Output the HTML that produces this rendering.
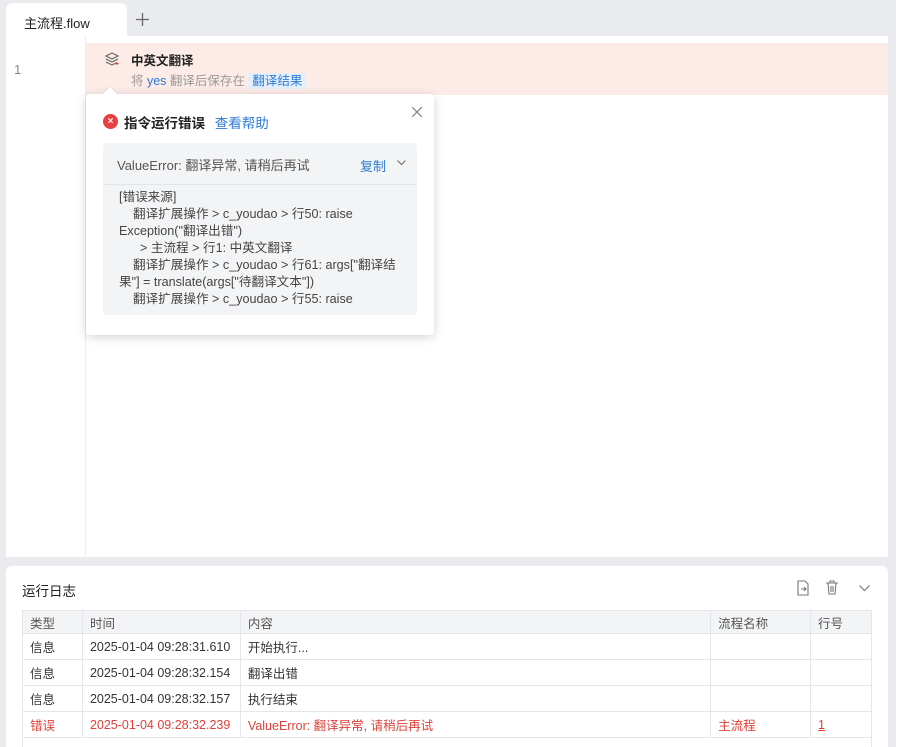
<!DOCTYPE html>
<html><head><meta charset="utf-8"><style>
*{box-sizing:border-box;margin:0;padding:0}
html,body{width:905px;height:747px;overflow:hidden}
body{background:#fff;font-family:"Liberation Sans","Noto Sans CJK SC",sans-serif;font-size:13px;color:#333;position:relative}
.bg{position:absolute;left:0;top:0;width:896px;height:747px;background:#eaebef}
.abs{position:absolute}
table{border-collapse:collapse;font-size:12.5px}
td{border:1px solid #e4e6ea;height:26px;padding:0 7px;white-space:nowrap}
tr.h td{background:#f3f4f6;height:23px;color:#555}
tr.err td{color:#e0403a}
</style></head><body>
<div class="bg"></div>
<div class="abs" style="left:6px;top:3px;width:121px;height:34px;background:#fff;border-radius:6px 6px 0 0;padding:10px 0 0 18px;font-size:13px;color:#222">主流程.flow</div>
<svg class="abs" style="left:136px;top:13px" width="13" height="13" viewBox="0 0 13 13" stroke="#666" stroke-width="1.3"><path d="M6.5 0v13M0 6.5h13"/></svg>
<div class="abs" style="left:6px;top:36px;width:882px;height:521px;background:#fff"></div>
<div class="abs" style="left:85px;top:36px;width:1px;height:521px;background:#eceef1"></div>
<div class="abs" style="left:14px;top:62px;color:#888;font-size:13px">1</div>
<div class="abs" style="left:86px;top:43px;width:802px;height:52px;background:#fdebe8"></div>
<svg class="abs" style="left:104px;top:51px" width="16" height="16" viewBox="0 0 16 16" fill="none" stroke="#666" stroke-width="1.1"><path d="M8 2 L14 5 L8 8 L2 5Z"/><path d="M2 8 L8 11 L14 8"/><path d="M2 11 L8 14 L12 12"/><path d="M12 11 l3 1.5 -3 1.5z" fill="#e0403a" stroke="none"/></svg>
<div class="abs" style="left:131px;top:50px;font-weight:bold;font-size:12.5px;color:#222">中英文翻译</div>
<div class="abs" style="left:131px;top:70px;font-size:12.5px;color:#999">将 <span style="color:#2e7bd6">yes</span> 翻译后保存在 <span style="color:#2e7bd6;background:#e3effc;padding:1px 4px;border-radius:2px">翻译结果</span></div>
<div class="abs" style="left:86px;top:94px;width:348px;height:241px;background:#fff;border-radius:4px;box-shadow:0 2px 10px rgba(0,0,0,.18)"></div>
<div class="abs" style="left:105px;top:89px;width:10px;height:10px;background:#fff;transform:rotate(45deg);box-shadow:-1px -1px 2px rgba(0,0,0,.06)"></div>
<div class="abs" style="left:103px;top:114px;width:15px;height:15px;border-radius:50%;background:#e84040;color:#fff;font-size:10px;text-align:center;line-height:15px;font-weight:bold">×</div>
<div class="abs" style="left:124px;top:112px;font-weight:bold;font-size:13.5px;color:#222">指令运行错误 <span style="font-weight:normal;color:#2e7bd6;margin-left:6px">查看帮助</span></div>
<svg class="abs" style="left:412px;top:107px" width="10" height="10" viewBox="0 0 10 10" stroke="#888" stroke-width="1.3"><path d="M0 0L10 10M10 0L0 10"/></svg>
<div class="abs" style="left:103px;top:143px;width:314px;height:172px;background:#f3f4f6;border-radius:4px"></div>
<div class="abs" style="left:103px;top:184px;width:314px;height:1px;background:#e3e5e9"></div>
<div class="abs" style="left:117px;top:155px;font-size:13px;color:#555">ValueError: 翻译异常, 请稍后再试</div>
<div class="abs" style="left:360px;top:156px;font-size:13px;color:#2e7bd6">复制</div>
<svg class="abs" style="left:397px;top:160px" width="9" height="6" viewBox="0 0 9 6" fill="none" stroke="#777" stroke-width="1.2"><path d="M0.5 0.5L4.5 4.5L8.5 0.5"/></svg>
<div class="abs" style="left:119px;top:189px;font-size:12.6px;line-height:17px;color:#444;white-space:pre">[错误来源]
    翻译扩展操作 &gt; c_youdao &gt; 行50: raise
Exception("翻译出错")
      &gt; 主流程 &gt; 行1: 中英文翻译
    翻译扩展操作 &gt; c_youdao &gt; 行61: args["翻译结
果"] = translate(args["待翻译文本"])
    翻译扩展操作 &gt; c_youdao &gt; 行55: raise</div>
<div class="abs" style="left:6px;top:566px;width:882px;height:181px;background:#fff;border-radius:6px 6px 0 0"></div>
<div class="abs" style="left:22px;top:580px;font-size:13.5px;color:#222">运行日志</div>
<svg class="abs" style="left:796px;top:580px" width="14" height="16" viewBox="0 0 14 16" fill="none" stroke="#777" stroke-width="1.1"><path d="M2 1h7l3 3v11H2z"/><path d="M5 9h5M8 7l2 2-2 2"/></svg>
<svg class="abs" style="left:825px;top:580px" width="14" height="15" viewBox="0 0 14 15" fill="none" stroke="#777" stroke-width="1.1"><path d="M1 3h12M5 3V1h4v2M3 3l1 11h6l1-11M6 6v6M8 6v6"/></svg>
<svg class="abs" style="left:859px;top:585px" width="11" height="7" viewBox="0 0 11 7" fill="none" stroke="#777" stroke-width="1.2"><path d="M0.5 0.5L5.5 5.5L10.5 0.5"/></svg>
<table class="abs" style="left:22px;top:610px;width:850px">
<colgroup><col style="width:60px"><col style="width:158px"><col style="width:471px"><col style="width:100px"><col style="width:61px"></colgroup>
<tr class="h"><td>类型</td><td>时间</td><td>内容</td><td>流程名称</td><td>行号</td></tr>
<tr><td>信息</td><td>2025-01-04 09:28:31.610</td><td>开始执行...</td><td></td><td></td></tr>
<tr><td>信息</td><td>2025-01-04 09:28:32.154</td><td>翻译出错</td><td></td><td></td></tr>
<tr><td>信息</td><td>2025-01-04 09:28:32.157</td><td>执行结束</td><td></td><td></td></tr>
<tr class="err"><td>错误</td><td>2025-01-04 09:28:32.239</td><td>ValueError: 翻译异常, 请稍后再试</td><td>主流程</td><td><u>1</u></td></tr>
<tr><td colspan="5"></td></tr>
</table>
</body></html>
